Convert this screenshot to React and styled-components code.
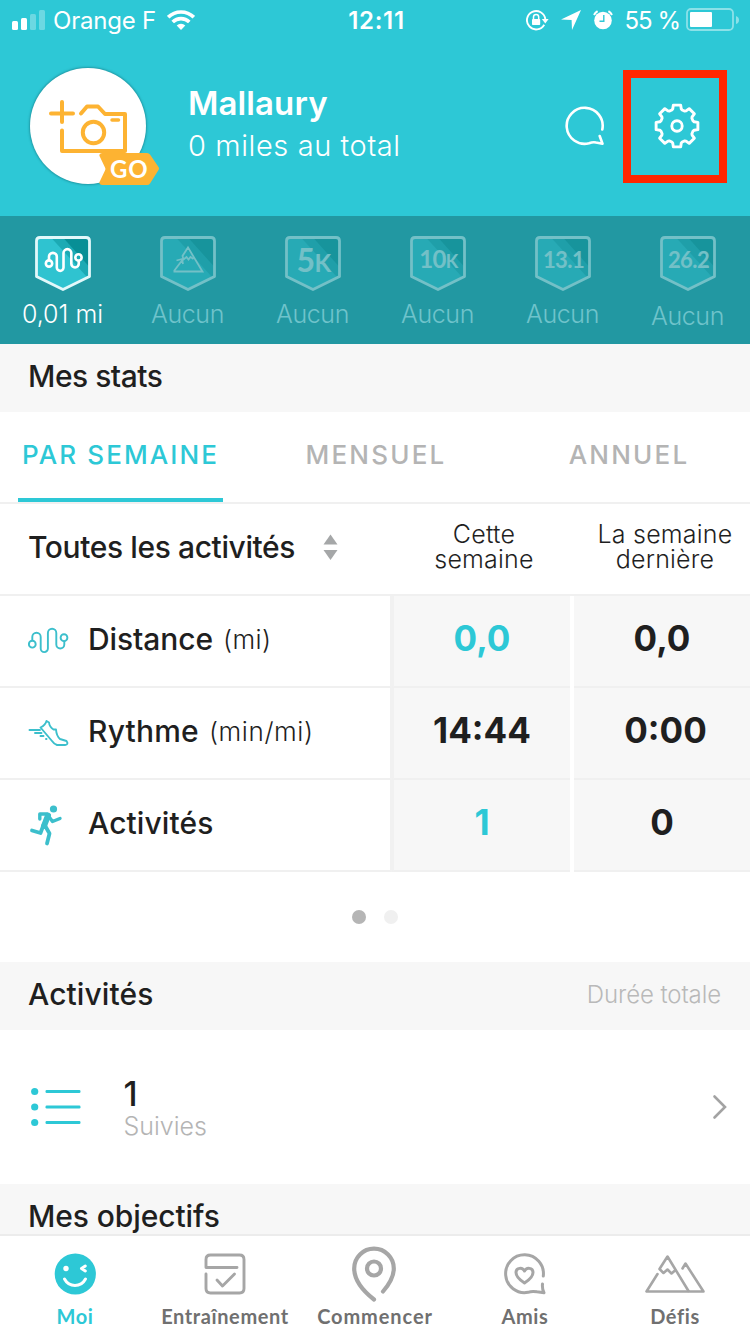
import React from "react";
import styled, { createGlobalStyle } from "styled-components";

const badges = [
    { id: 1, kind: "route", label: "0,01 mi", earned: true },
    { id: 2, kind: "peak", label: "Aucun" },
    { id: 3, text: "5", unit: "K", size: 32, label: "Aucun" },
    { id: 4, text: "10", unit: "K", size: 24, label: "Aucun" },
    { id: 5, text: "13.1", size: 22, label: "Aucun" },
    { id: 6, text: "26.2", size: 22, label: "Aucun", low: true },
];

const stats = [
    { id: 1, icon: <RouteIcon />, name: "Distance", unit: "(mi)", current: "0,0", last: "0,0", accent: true, space: "-0.1px", unitSpace: "0.4px" },
    { id: 2, icon: <ShoeIcon />, name: "Rythme", unit: "(min/mi)", current: "14:44", last: "0:00", space: "0.2px", unitSpace: "0.6px", shift: "7px" },
    { id: 3, icon: <RunnerIcon />, name: "Activités", current: "1", last: "0", accent: true, space: "0.1px" },
];

const navItems = [
    { id: 1, icon: <SmileIcon />, label: "Moi", active: true },
    { id: 2, icon: <PlanIcon />, label: "Entraînement" },
    { id: 3, icon: <PinIcon />, label: "Commencer", space: "0.9px" },
    { id: 4, icon: <FriendsIcon />, label: "Amis" },
    { id: 5, icon: <MountainsIcon />, label: "Défis" },
];

export default function App() {
    return (
        <Screen>
            <GlobalStyle />
            <Header>
                <StatusBar />
                <Profile>
                    <Avatar>
                        <CameraIcon />
                        <GoTag>
                            <GoShape />
                            <GoText>GO</GoText>
                        </GoTag>
                    </Avatar>
                    <ProfileText>
                        <UserName>Mallaury</UserName>
                        <Total>0 miles au total</Total>
                    </ProfileText>
                    <ChatIcon />
                    <Settings>
                        <GearIcon />
                    </Settings>
                </Profile>
            </Header>
            <BadgeBar>
                {badges.map((badge) => (
                    <BadgeItem key={badge.id} $earned={badge.earned}>
                        <BadgeIcon badge={badge} />
                        <BadgeLabel $low={badge.low} $earned={badge.earned}>{badge.label}</BadgeLabel>
                    </BadgeItem>
                ))}
            </BadgeBar>
            <Section>
                <SectionTitle $space="-0.5px">Mes stats</SectionTitle>
            </Section>
            <Tabs>
                <Tab $active $width="205px" $space="2.1px">PAR SEMAINE</Tab>
                <Tab $width="148px" $space="2.2px">MENSUEL</Tab>
                <Tab $width="130px" $space="2.2px">ANNUEL</Tab>
            </Tabs>
            <Row>
                <Filter>
                    <FilterText>Toutes les activités</FilterText>
                    <SortIcon />
                </Filter>
                <ColumnTitle $width="182px">Cette<br />semaine</ColumnTitle>
                <ColumnTitle $width="178px">La semaine<br />dernière</ColumnTitle>
            </Row>
            {stats.map((stat) => (
                <Row key={stat.id}>
                    <StatName $space={stat.space}>
                        <StatIcon>{stat.icon}</StatIcon>
                        {stat.name}
                        {stat.unit && <Unit $space={stat.unitSpace}>{stat.unit}</Unit>}
                    </StatName>
                    <Value $first $accent={stat.accent}>{stat.current}</Value>
                    <Value $shift={stat.shift}>{stat.last}</Value>
                </Row>
            ))}
            <Dots>
                <Dot $active />
                <Dot />
            </Dots>
            <Section>
                <SectionTitle $space="0.1px">Activités</SectionTitle>
                <SectionNote>Durée totale</SectionNote>
            </Section>
            <ActivityRow>
                <ListIcon />
                <ActivityText>
                    <Count>1</Count>
                    <Tracked>Suivies</Tracked>
                </ActivityText>
                <ChevronIcon />
            </ActivityRow>
            <Section $short>
                <SectionTitle $space="-0.1px">Mes objectifs</SectionTitle>
            </Section>
            <Nav>
                {navItems.map((item) => (
                    <NavItem key={item.id} $active={item.active} $space={item.space}>
                        <NavIcon>{item.icon}</NavIcon>
                        {item.label}
                    </NavItem>
                ))}
            </Nav>
        </Screen>
    );
}

function StatusBar() {
    return (
        <Status>
            <StatusSide>
                <svg width="34" height="20" viewBox="0 0 34 20" fill="#fff">
                    <rect x="0" y="11" width="6" height="9" rx="1.5" />
                    <rect x="9" y="8" width="6" height="12" rx="1.5" />
                    <rect x="18" y="4" width="6" height="16" rx="1.5" opacity="0.3" />
                    <rect x="27" y="0" width="6" height="20" rx="1.5" opacity="0.3" />
                </svg>
                <Carrier>Orange F</Carrier>
                <svg width="28" height="20" viewBox="0 0 28 20" fill="none" stroke="#fff" strokeWidth="3.6">
                    <path d="M1.2 7.2a18.2 18.2 0 0 1 25.6 0" />
                    <path d="M5.7 12a11.8 11.8 0 0 1 16.6 0" />
                    <path d="M14 20l-4.3-4.4a6.1 6.1 0 0 1 8.6 0z" fill="#fff" stroke="none" />
                </svg>
            </StatusSide>
            <Time>12:11</Time>
            <StatusSide $right>
                <svg width="23" height="21" viewBox="0 0 23 21" fill="none" stroke="#fff" strokeWidth="1.9">
                    <path d="M18.2 14.7a9.2 9.2 0 1 1 1.1-5.5" />
                    <path d="M15.8 9h6.8l-3.3 4.5z" fill="#fff" stroke="none" />
                    <rect x="6" y="9" width="8.2" height="6" rx="0.8" fill="#fff" stroke="none" />
                    <path d="M7.5 9V7a2.6 2.6 0 0 1 5.2 0v2" strokeWidth="1.5" />
                </svg>
                <svg width="20" height="20" viewBox="0 0 20 20" fill="#fff">
                    <path d="M20 0L11 20 10.6 10 0 9.5z" />
                </svg>
                <svg width="20" height="20" viewBox="0 0 20 20">
                    <circle cx="10" cy="10.5" r="8.8" fill="#fff" />
                    <path d="M10.8 5v6.3H6.5" fill="none" stroke="#2dc8d6" strokeWidth="1.4" />
                    <path d="M1 5A10 10 0 0 1 4.6 1.1M15.4 1.1A10 10 0 0 1 19 5" fill="none" stroke="#fff" strokeWidth="2" />
                </svg>
                <Battery>55 %</Battery>
                <svg width="53" height="24" viewBox="0 0 53 24">
                    <rect x="1" y="1" width="46" height="21" rx="4" fill="none" stroke="#fff" strokeWidth="1.8" opacity="0.45" />
                    <rect x="4" y="4" width="22" height="15" rx="1" fill="#fff" />
                    <path d="M50 8q3 1 3 4t-3 4z" fill="#fff" opacity="0.45" />
                </svg>
            </StatusSide>
        </Status>
    );
}

function CameraIcon() {
    return (
        <svg width="80" height="54" viewBox="0 0 80 54" fill="none" stroke="#fdb332" strokeWidth="4" strokeLinecap="round" strokeLinejoin="round">
            <path d="M3 14.5h22M14 3v20" />
            <path d="M14 31.5V52H77V15H57L50 7.5H39L33 14.5" />
            <path d="M64 21h6.5" strokeWidth="3.5" />
            <circle cx="45.5" cy="33.5" r="10.7" />
        </svg>
    );
}

function GoShape() {
    return (
        <svg width="60" height="32" viewBox="0 0 60 32">
            <path d="M3 0H48q2 0 3 1.5L59.500 14q1 1.500 0 3L51 30.500Q50 32 48 32H3Q-1 31.500 1 28L6 17.500q.8-1.500 0-3L1 4Q-1 .5 3 0z" fill="#fdb332" />
        </svg>
    );
}

function ChatIcon() {
    return (
        <svg width="40" height="40" viewBox="0 0 40 40" fill="none" stroke="#fff" strokeWidth="2.6" strokeLinecap="round" strokeLinejoin="round">
            <path d="M37.300 23.500A18 18 0 1 0 24 37.300q4-1.600 7-.8l6.500 1.300-2.800-7.800" />
        </svg>
    );
}

function GearIcon() {
    // tooth outline in degrees and radius, repeated every 45 degrees
    const tooth = [[-17.5, 16.8], [-14, 17.6], [-10, 21.2], [10, 21.2], [14, 17.6], [17.5, 16.8]];
    const points = [];
    for (let i = 0; i < 8; i++) {
        tooth.forEach(([deg, radius]) => {
            const angle = ((i * 45 + deg) * Math.PI) / 180;
            points.push(`${(23 + radius * Math.sin(angle)).toFixed(2)},${(23 - radius * Math.cos(angle)).toFixed(2)}`);
        });
    }
    return (
        <svg width="46" height="46" viewBox="0 0 46 46" fill="none" stroke="#fff" strokeWidth="2.9" strokeLinejoin="round">
            <polygon points={points.join(" ")} />
            <circle cx="23" cy="23" r="5.2" />
        </svg>
    );
}

function BadgeIcon({ badge }) {
    return (
        <svg width="60" height="60" viewBox="0 0 60 60">
            <path d="M7 4.500H53Q56.500 4.500 56.500 8V43.500L30 56.500 3.500 43.500V8Q3.500 4.500 7 4.500z" fill="#2fc3d0" />
            <path d="M18 4.500H53Q56.500 4.500 56.500 8V43.500L54 44z" fill="#1caab4" />
            <path d="M30 4.500H53Q56.500 4.500 56.500 8V34z" fill="#088f96" />
            <path d="M7 4.500H53Q56.500 4.500 56.500 8V43.500L30 56.500 3.500 43.500V8Q3.500 4.500 7 4.500z" fill="none" stroke="#e2f8fa" strokeWidth="2.8" strokeLinejoin="round" />
            {badge.kind === "route" && (
                <g transform="translate(12 14.500) scale(0.93)">
                    <RoutePath color="#fff" width={2.8} />
                </g>
            )}
            {badge.kind === "peak" && (
                <path d="M15.500 38.500h29L30 14.500 24.500 23l1 3.500L28.500 24l2 2.500 2-2.500 3 2M16 38l8-10.500M18.500 27.500l5.500-1.500 1 5" fill="none" stroke="#e2f8fa" strokeWidth="1.8" />
            )}
            {badge.text && (
                <BadgeText x="30.5" y={badge.size > 25 ? 38.5 : 34.5} textAnchor="middle" fontSize={badge.size}>
                    {badge.text}
                    {badge.unit && <tspan fontSize={badge.size * 0.76}>{badge.unit}</tspan>}
                </BadgeText>
            )}
        </svg>
    );
}

function RoutePath({ color, width }) {
    return (
        <g fill="none" stroke={color} strokeWidth={width}>
            <circle cx="4.3" cy="17.2" r="3.4" />
            <circle cx="36" cy="10.7" r="3.4" />
            <path d="M4.300 13.800V10a4.200 4.200 0 0 1 8.400 0V21.500a3.600 3.600 0 0 0 7.200 0V6a4.200 4.200 0 0 1 8.400 0V17.500a4 4 0 0 0 8 0V14" />
        </g>
    );
}

function RouteIcon() {
    return (
        <svg width="41" height="28" viewBox="0 0 41 28">
            <RoutePath color="#3cbfcc" width={1.9} />
        </svg>
    );
}

function ShoeIcon() {
    return (
        <svg width="41" height="28" viewBox="0 0 41 28" fill="none" stroke="#3cbfcc" strokeWidth="1.9" strokeLinecap="round" strokeLinejoin="round">
            <path d="M12.500 8.500Q17.500 6 18.500 2L21 3.500Q21.500 8 25.500 10.500H28Q28.500 17 32 20L38.500 22Q41 25.500 37 26H29Q26 25 24 22L12.500 8.500z" />
            <path d="M1.500 11h10.500M7 14h6.500M12.500 17h3M18 20h.5" />
        </svg>
    );
}

function RunnerIcon() {
    return (
        <svg width="35" height="41" viewBox="-2 0 35 41" fill="none" stroke="#3cbfcc" strokeWidth="3.8" strokeLinecap="round" strokeLinejoin="round">
            <circle cx="23.5" cy="4" r="3.6" fill="#3cbfcc" stroke="none" />
            <path d="M9.800 14V9H17L22.500 16.500 30 13.500" strokeWidth="3.4" />
            <path d="M18 10.500L14 21" strokeWidth="6" />
            <path d="M13.500 20L10.500 28 2 25.500" />
            <path d="M15.500 21.500L19.500 28.500 17 38.500" />
        </svg>
    );
}

function SortIcon() {
    return (
        <svg width="15" height="27" viewBox="0 0 15 27" fill="#a5a7a8">
            <path d="M7.500 0.500L14.500 10.500H0.500z" />
            <path d="M7.500 26L14.500 16H0.500z" />
        </svg>
    );
}

function ListIcon() {
    return (
        <svg width="50" height="40" viewBox="0 0 50 40" fill="#2dc8d6">
            {[4.5, 20, 35.5].map((y) => (
                <React.Fragment key={y}>
                    <circle cx="3.7" cy={y} r="3.6" />
                    <rect x="14.5" y={y - 1.4} width="35" height="2.8" rx="1.2" />
                </React.Fragment>
            ))}
        </svg>
    );
}

function ChevronIcon() {
    return (
        <svg width="16" height="26" viewBox="0 0 16 26" fill="none" stroke="#a3a3a3" strokeWidth="2.6" strokeLinecap="round">
            <path d="M2.500 2.500L13 13 2.500 23.500" />
        </svg>
    );
}

function SmileIcon() {
    return (
        <svg width="42" height="42" viewBox="0 0 42 42" fill="none" stroke="#fff" strokeWidth="3" strokeLinecap="round">
            <circle cx="21.3" cy="21" r="20.6" fill="#2dc8d6" stroke="none" />
            <circle cx="12" cy="15.5" r="2.7" fill="#fff" stroke="none" />
            <path d="M31.300 13L27.500 15.500 31.300 18" strokeLinejoin="round" />
            <path d="M10.500 26Q14 32.500 21 32.500T31.500 26" />
        </svg>
    );
}

function PlanIcon() {
    return (
        <svg width="42" height="42" viewBox="0 0 42 42" fill="none" stroke="#a6a6a6" strokeWidth="2.9" strokeLinecap="round" strokeLinejoin="round">
            <path d="M33 14.500H2V6.500Q2 2 6.500 2H35.500Q40 2 40 6.500V35.500Q40 40 35.500 40H6.500Q2 40 2 35.500V21" />
            <path d="M13 27l5.500 6L30.500 21" />
        </svg>
    );
}

function PinIcon() {
    return (
        <svg width="46" height="57" viewBox="1 0 46 57" fill="none" stroke="#a6a6a6" strokeWidth="4.2" strokeLinecap="round">
            <path d="M32 45.500Q42.800 33 42.800 22.500A19.800 19.800 0 0 0 3.200 22.500Q3.200 38 23 53.500" strokeLinejoin="round" />
            <circle cx="23" cy="22.5" r="7" />
        </svg>
    );
}

function FriendsIcon() {
    return (
        <svg width="42" height="42" viewBox="0 0 42 42" fill="none" stroke="#a6a6a6" strokeWidth="3" strokeLinecap="round" strokeLinejoin="round">
            <path d="M39.300 23A18.900 18.900 0 1 0 24 39.300Q28 37.800 33 38.800L40 39.800Q38 36 38.500 31" />
            <path d="M20.500 30Q12 24.500 12 19.500C12 14.500 18.500 14 20.500 18C22.500 14 29 14.500 29 19.500Q29 24.500 20.500 30z" />
        </svg>
    );
}

function MountainsIcon() {
    return (
        <svg width="60" height="42" viewBox="0 0 60 42" fill="none" stroke="#a6a6a6" strokeWidth="2.6" strokeLinecap="round" strokeLinejoin="round">
            <path d="M12.500 21L1.500 38.500H58.500L40.500 10.500 37.500 15.500" />
            <path d="M43.500 38L22.500 3.500 14.500 16 18.500 20 22.500 16.500 26.500 20.500 30 17.500" />
        </svg>
    );
}

const GlobalStyle = createGlobalStyle`
    * {
        box-sizing: border-box;
    }
    body {
        margin: 0;
        background: #fff;
    }
    svg {
        display: block;
        flex-shrink: 0;
    }
    h1, h2, h3, p {
        margin: 0;
    }
`;
const Screen = styled.div`
    width: 750px;
    height: 1334px;
    overflow: hidden;
    background: #fff;
    color: #1f1f1f;
    font-family: Inter, "Liberation Sans", sans-serif;
    white-space: nowrap;
`;
const Header = styled.header`
    height: 216px;
    background: #2dc8d6;
    color: #fff;
`;
const Status = styled.div`
    display: flex;
    height: 40px;
    padding: 0 11px 0 12px;
    align-items: center;
    justify-content: space-between;
    font-size: 24px;
`;
const StatusSide = styled.div`
    display: flex;
    width: 300px;
    align-items: center;
    justify-content: ${({ $right }) => ($right ? "flex-end" : "flex-start")};
    gap: ${({ $right }) => ($right ? "12px" : "0")};
`;
const Carrier = styled.span`
    margin: 1px 11px 0 7px;
    letter-spacing: -0.2px;
`;
const Time = styled.span`
    font-weight: 600;
    padding: 1px 0 0 2px;
    letter-spacing: 0.7px;
`;
const Battery = styled.span`
    margin-right: -6px;
    padding-top: 1px;
    letter-spacing: -1px;
`;
const Profile = styled.div`
    display: flex;
    height: 172px;
    align-items: center;
    padding: 0 23px 0 30px;
`;
const Avatar = styled.div`
    position: relative;
    width: 116px;
    height: 116px;
    margin-bottom: 1px;
    border-radius: 50%;
    background: #fff;
    box-shadow: 0 0 2px 1px rgba(20, 110, 120, 0.5);
    padding: 31px 0 0 17.5px;
`;
const GoTag = styled.div`
    position: absolute;
    left: 69px;
    top: 85px;
`;
const GoText = styled.span`
    position: absolute;
    left: 11px;
    top: 2px;
    font-size: 24px;
    line-height: 28px;
    font-weight: 700;
    font-family: Lato, sans-serif;
    letter-spacing: 0.8px;
`;
const ProfileText = styled.div`
    flex: 1;
    margin: 0 0 2px 42px;
`;
const UserName = styled.h1`
    font-size: 33px;
    line-height: 40px;
    font-weight: 600;
    letter-spacing: 0.1px;
`;
const Total = styled.p`
    padding-top: 1px;
    font-size: 29px;
    line-height: 44px;
    font-weight: 300;
    letter-spacing: 0.6px;
`;
const Settings = styled.div`
    display: flex;
    width: 104px;
    height: 113px;
    margin-left: 18px;
    padding: 0 0 0 4px;
    border: 8px solid #ff2600;
    align-items: center;
    justify-content: center;
`;
const BadgeBar = styled.div`
    display: grid;
    grid-template-columns: repeat(6, 125px);
    height: 128px;
    padding-top: 17px;
    background: #2298a2;
    color: #fff;
`;
const BadgeItem = styled.div`
    display: flex;
    flex-direction: column;
    align-items: center;

    svg {
        opacity: ${({ $earned }) => ($earned ? 1 : 0.42)};
    }
`;
const BadgeText = styled.text`
    fill: #e2f8fa;
    font-family: Lato, sans-serif;
    font-weight: 700;
    letter-spacing: -0.6px;
`;
const BadgeLabel = styled.span`
    font-size: 25px;
    line-height: 30px;
    font-weight: 300;
    letter-spacing: ${({ $earned }) => ($earned ? "0" : "-0.4px")};
    margin-top: ${({ $low }) => ($low ? "8px" : "6px")};
    color: ${({ $earned }) => ($earned ? "#fff" : "#6fc3cb")};
`;
const Section = styled.section`
    display: flex;
    height: ${({ $short }) => ($short ? "50px" : "68px")};
    padding: ${({ $short }) => ($short ? "17px 29px 4px 28px" : "0 29px 5px 28px")};
    background: #f7f7f7;
    align-items: center;
    justify-content: space-between;
`;
const SectionTitle = styled.h2`
    font-size: 30px;
    line-height: 36px;
    font-weight: 500;
    letter-spacing: ${({ $space }) => $space};
`;
const SectionNote = styled.span`
    padding-top: 1px;
    color: #b9b9b9;
    font-size: 24px;
    font-weight: 300;
    letter-spacing: -0.1px;
`;
const Tabs = styled.div`
    display: flex;
    height: 92px;
    padding-left: 18px;
    border-bottom: 2px solid #f0f0f0;
`;
const Tab = styled.div`
    flex-shrink: 0;
    width: ${({ $width }) => $width};
    height: 90px;
    padding-top: 26px;
    border-bottom: 4px solid ${({ $active }) => ($active ? "#2dc8d6" : "transparent")};
    color: ${({ $active }) => ($active ? "#2dc8d6" : "#b4b4b4")};
    font-size: 26px;
    line-height: 34px;
    font-weight: 500;
    text-align: center;
    letter-spacing: ${({ $space }) => $space};

    & + & {
        margin-left: 79px;
    }

    &:last-child {
        margin-left: 114px;
    }
`;
const Row = styled.div`
    display: flex;
    height: 92px;
`;
const Cell = styled.div`
    display: flex;
    align-items: center;
    border-bottom: 2px solid #f0f0f0;
`;
const Filter = styled(Cell)`
    width: 390px;
    padding: 0 0 4px 28px;
    font-size: 30px;
    font-weight: 500;
    letter-spacing: -0.4px;
`;
const FilterText = styled.span`
    width: 295px;
`;
const ColumnTitle = styled(Cell)`
    display: block;
    width: ${({ $width }) => $width};
    padding: 18px 0 0 6px;
    font-size: 25px;
    line-height: 25px;
    font-weight: 350;
    letter-spacing: 0.2px;
    text-align: center;

    &:last-child {
        padding-left: 8px;
    }
`;
const StatName = styled(Cell)`
    width: 390px;
    padding: 0 0 5px 28px;
    font-size: 30px;
    font-weight: 500;
    letter-spacing: ${({ $space }) => $space};
`;
const StatIcon = styled.span`
    display: flex;
    width: 60px;
    padding-top: 5px;
`;
const Unit = styled.span`
    margin-left: 10px;
    padding-top: 1px;
    font-size: 26px;
    font-weight: 300;
    letter-spacing: ${({ $space }) => $space};
`;
const Value = styled(Cell)`
    width: ${({ $first }) => ($first ? "180px" : "176px")};
    margin-left: ${({ $first }) => ($first ? "0" : "4px")};
    padding: 0 0 6px ${({ $shift }) => $shift || "0"};
    border-left: ${({ $first }) => ($first ? "4px solid #f1f1f1" : "none")};
    background: #f7f7f7;
    color: ${({ $accent }) => ($accent ? "#2dc8d6" : "#1f1f1f")};
    justify-content: center;
    font-size: 35px;
    font-weight: 700;

    &:last-child {
        color: #1f1f1f;
    }
`;
const Dots = styled.div`
    display: flex;
    height: 90px;
    align-items: center;
    justify-content: center;
    gap: 18px;
`;
const Dot = styled.span`
    width: 14px;
    height: 14px;
    border-radius: 50%;
    background: ${({ $active }) => ($active ? "#b5b5b5" : "#f0f0f0")};
`;
const ActivityRow = styled.div`
    display: flex;
    height: 154px;
    padding: 0 22px 0 30.5px;
    align-items: center;
`;
const ActivityText = styled.div`
    flex: 1;
    padding: 3px 0 0 43px;
`;
const Count = styled.p`
    font-size: 34px;
    line-height: 34px;
    font-weight: 500;
`;
const Tracked = styled.p`
    padding-top: 1px;
    color: #b4b4b4;
    font-size: 25px;
    line-height: 28px;
    font-weight: 300;
`;
const Nav = styled.nav`
    display: grid;
    grid-template-columns: repeat(5, 150px);
    height: 100px;
    border-top: 2px solid #ececec;
    background: #fff;
`;
const NavItem = styled.div`
    display: flex;
    flex-direction: column;
    align-items: center;
    color: ${({ $active }) => ($active ? "#2dc8d6" : "#707070")};
    font-family: Lato, sans-serif;
    font-size: 20px;
    line-height: 24px;
    font-weight: 700;
    letter-spacing: ${({ $space }) => $space || "0.6px"};
`;
const NavIcon = styled.div`
    display: flex;
    height: 68px;
    padding-top: 8px;
    align-items: center;
`;
